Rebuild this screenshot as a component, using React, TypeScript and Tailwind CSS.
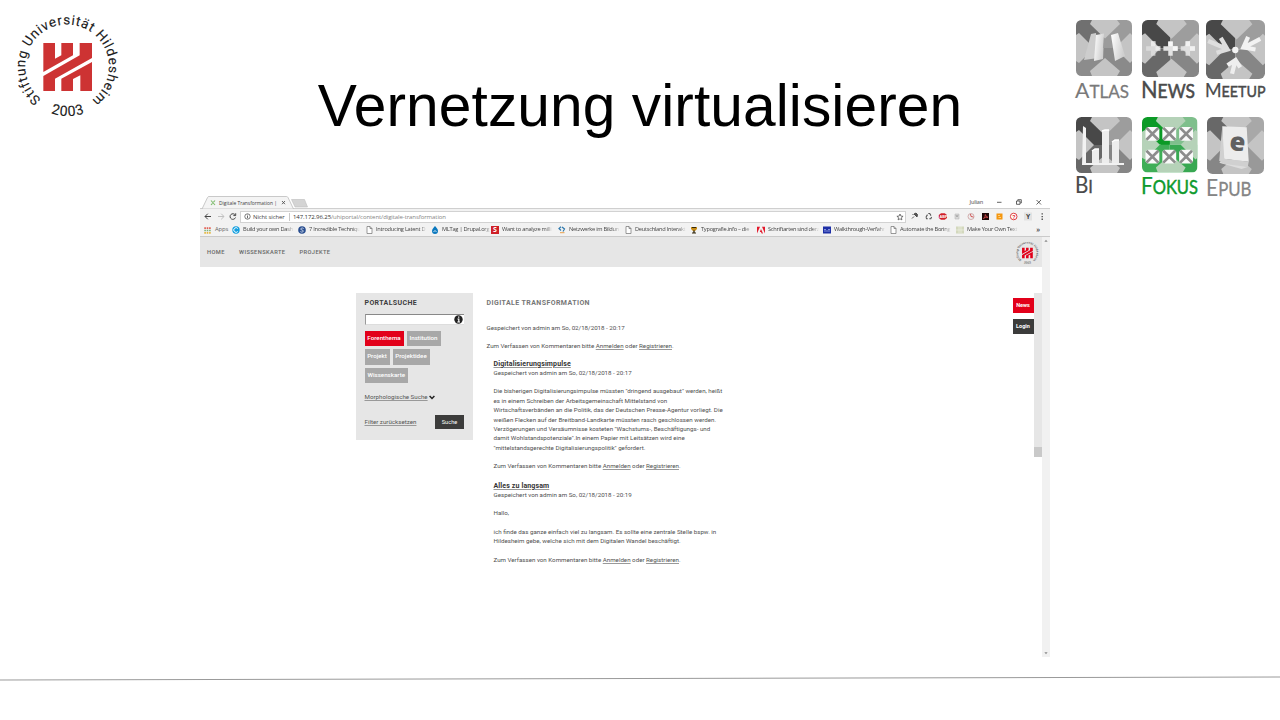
import React from "react";

type TileProps = {
  label: string;
  first: string;
  rest: string;
  color: string;
  arms: [string, string, string, string];
  light?: string;
  size: number;
  textLength: number;
  baseline: number;
  capSize: number;
  thick?: number;
  children?: React.ReactNode;
};

function Tile({ label, first, rest, color, arms, light = "#c4c4c4", size, textLength, baseline, capSize, thick = 0.1, children }: TileProps) {
  const id = `clip-${label}`;
  return (
    <svg className="block overflow-visible" width={size} height="84" viewBox={`0 0 ${size} 84`}>
      <defs>
        <clipPath id={id}>
          <rect width="56" height="56" rx="5.5" />
        </clipPath>
        <linearGradient id="sheet" x1="0" y1="0" x2="1" y2="0.4">
          <stop offset="0" stopColor="#ffffff" />
          <stop offset="1" stopColor="#cfcfcf" />
        </linearGradient>
      </defs>
      <g transform={`scale(${size / 56})`} clipPath={`url(#${id})`}>
        <path d="M0 0H28V28H0Z" fill={arms[0]} />
        <path d="M28 0H56V28H28Z" fill={arms[1]} />
        <path d="M0 28H28V56H0Z" fill={arms[2]} />
        <path d="M28 28H56V56H28Z" fill={arms[3]} />
        <g fill={light}>
          <path d="M16 0H41L44 4L29 18.5L14 4Z" />
          <path d="M16 56H41L44 51L29 38L14 51Z" />
          <path d="M0 15L3 13L18 28L3 43L0 41Z" />
          <path d="M56 15L54 13L39 28L54 43L56 41Z" />
        </g>
        {children}
      </g>
      <text x="-1" y={baseline} fill={color} stroke={color} strokeWidth={thick} fontFamily="Lato, sans-serif" textLength={textLength} lengthAdjust="spacingAndGlyphs">
        <tspan fontSize={capSize}>{first}</tspan>
        <tspan fontSize={capSize * 0.8} strokeWidth={thick + 0.2}>{rest}</tspan>
      </text>
    </svg>
  );
}

const gray: [string, string, string, string] = ["#484848", "#9d9d9d", "#686868", "#868686"];

function Plus({ x, o }: { x: number; o: number }) {
  return (
    <g transform={`translate(${x} 28)`} opacity={o}>
      <path d="M-2.2 -7H2.2V-2.2H7V2.2H2.2V7H-2.2V2.2H-7V-2.2H-2.2Z" fill="#e2e2e2" />
      <path d="M-2.2 -7H2.2V-2.2H-2.2Z M2.2 -2.2H7V2.2H2.2Z" fill="#f8f8f8" />
    </g>
  );
}

function TileGrid() {
  const cells = [6.5, 23.5, 40.5].flatMap((x) => [10, 33].map((y) => [x, y]));
  return (
    <div className="grid grid-cols-[66px_64px_60px] grid-rows-[97px_84px]">
      <Tile label="atlas" first="A" rest="TLAS" color="#7a7a7a" arms={["#707070", "#9b9b9b", "#8c8c8c", "#8a8a8a"]} size={56} textLength={54} baseline={77.5} capSize={22}>
        <path d="M15 14L20 13L22 38L8 40Z" fill="#cdcdcd" />
        <path d="M20 15L28 13.5L27 39L18 41Z" fill="url(#sheet)" />
        <path d="M35 15L42 13L49 36L39 41Z" fill="url(#sheet)" />
      </Tile>
      <Tile label="news" first="N" rest="EWS" color="#4a4a4a" arms={gray} size={57} textLength={54} baseline={77.5} capSize={23.5} thick={0.35}>
        <Plus x={11} o={0.75} />
        <Plus x={28} o={1} />
        <Plus x={45} o={0.9} />
      </Tile>
      <Tile label="meetup" first="M" rest="EETUP" color="#4a4a4a" arms={gray} size={59} textLength={60.5} baseline={77} capSize={19.5} thick={0.25}>
        <g stroke="#eeeeee" strokeWidth="4" fill="none">
          <path d="M2 20L19 27M14 17L20.5 28L10 31" stroke="#dedede" />
          <path d="M51.5 18L36 26M40 16L35.5 26L47 28" stroke="#f2f2f2" />
          <path d="M24.7 51L28 38M20.5 43L28 38L32.5 45" />
        </g>
        <circle cx="27.8" cy="28.5" r="3" fill="#f4f4f4" />
      </Tile>
      <Tile label="bi" first="B" rest="I" color="#4a4a4a" arms={gray} size={56} textLength={18} baseline={76} capSize={22.5} thick={0.15}>
        <path d="M7 9L10 11V46H48V48H6Z" fill="#f2f2f2" />
        <path d="M16 34L19 32H23V46H16Z M26 14L29 13H33V46H26Z M36 25L39 23H43V46H36Z" fill="#ededed" />
        <path d="M16 34L19 32H23M26 14L29 13H33M36 25L39 23H43" stroke="#fff" strokeWidth="1.5" fill="none" />
      </Tile>
      <Tile label="fokus" first="F" rest="OKUS" color="#0c9a2c" arms={["#0b9a26", "#7fbf8c", "#3fae57", "#38a852"]} light="#b5d2b8" size={55.5} textLength={57} baseline={77} capSize={23} thick={0.25}>
        <path d="M19 15H28V28H19Z" fill="#0b9a26" />
        {cells.map(([x, y]) => (
          <g key={`${x}-${y}`} transform={`translate(${x - 3} ${y})`}>
            <path d="M2 0H12L14 2V12L12 14H2L0 12V2Z" fill="#fafafa" />
            <path d="M1 1L13 13M13 1L1 13" stroke="#8c8c8c" strokeWidth="2.7" />
          </g>
        ))}
      </Tile>
      <div className="pl-px">
        <Tile label="epub" first="E" rest="PUB" color="#858585" arms={["#686868", "#a8a8a8", "#868686", "#999999"]} size={57} textLength={45.5} baseline={78.5} capSize={23}>
          <path d="M15 43L40 49L34 51L12 45Z" fill="#dddddd" />
          <path d="M15 9L39 10L41 44L16 41Z" fill="#ececec" />
          <path d="M15 9L12 43L16 46L40 49L41 44L17 41Z" fill="#d0d0d0" />
          <text x="22" y="33" fontSize="25" fontWeight="800" fontFamily="Open Sans, sans-serif" fill="#606060" transform="rotate(5 28 28)">e</text>
        </Tile>
      </div>
    </div>
  );
}

function UniLogo({ size, id, red, ink }: { size: number; id: string; red: string; ink: string }) {
  return (
    <svg width={size} height={size} viewBox="16 13 104 104" className="block shrink-0 overflow-visible">
      <defs>
        <path id={`${id}-top`} d="M41.2 99.2A41.8 41.8 0 1 1 93.4 98.8" />
        <path id={`${id}-bottom`} d="M42 108.7A50 50 0 0 0 94 108.7" />
      </defs>
      <g fill={ink} stroke={ink} strokeWidth="0.1" fontFamily="Roboto, sans-serif" fontSize="13.6">
        <text textLength="208">
          <textPath href={`#${id}-top`} textLength="208">Stiftung Universität Hildesheim</textPath>
        </text>
        <text textAnchor="middle" fontSize="14.2" letterSpacing="0.7">
          <textPath href={`#${id}-bottom`} startOffset="50%">2003</textPath>
        </text>
      </g>
      <g fill={red} transform="translate(40 40) scale(0.3333)">
        <path d="M10 9H45V56L64 46V9H99V46L10 96Z" />
        <path d="M10 108L119 46V9H156V54L45 116V153H10Z" />
        <path d="M64 153V116L156 66V153H121V106L99 117V153Z" />
      </g>
    </svg>
  );
}

function PageGlyph() {
  return (
    <svg width="7" height="8" viewBox="0 0 7 8">
      <path d="M1 .5H4L6 2.5V7.5H1ZM4 .5V2.5H6" fill="#fff" stroke="#707070" strokeWidth=".7" />
    </svg>
  );
}

const bookmarks: { text: string; icon: React.ReactNode; w: string }[] = [
  { text: "Build your own Dash", w: "w-[66px]", icon: <svg width="8" height="8" viewBox="0 0 8 8"><circle cx="4" cy="4" r="3.7" fill="#129fe0" /><path d="M5.8 2.5A2.3 2.3 0 1 0 5.8 5.5" stroke="#fff" fill="none" /></svg> },
  { text: "7 Incredible Techniqu", w: "w-[67px]", icon: <svg width="8" height="8" viewBox="0 0 8 8"><circle cx="4" cy="4" r="3.8" fill="#284d8f" /><path d="M5.7 2.5Q4 1.2 2.8 2.6Q2.4 3.8 4 4Q5.8 4.3 5.2 5.6Q4 6.8 2.3 5.6" fill="none" stroke="#dde6f5" strokeWidth=".8" /></svg> },
  { text: "Introducing Latent D", w: "w-[66px]", icon: <PageGlyph /> },
  { text: "MLTag | Drupal.org", w: "w-[60px]", icon: <svg width="8" height="8" viewBox="0 0 8 8"><path d="M4 0C5 1.5 7 2.5 7 5A3 3 0 0 1 1 5C1 2.5 3 1.5 4 0Z" fill="#0b78be" /><path d="M2.5 5.5Q4 4 5.5 5.5" stroke="#fff" strokeWidth=".8" fill="none" /></svg> },
  { text: "Want to analyze milli", w: "w-[67px]", icon: <span className="flex size-[8px] items-center justify-center bg-[#cf2027] text-[7px] font-bold tracking-normal text-white">S</span> },
  { text: "Netzwerke im Bildun", w: "w-[66px]", icon: <svg width="8" height="8" viewBox="0 0 8 8"><path d="M3 .8L1 2.5L3 4.5M4 1L6.5 3L5 5.5" stroke="#2f79ad" strokeWidth="1.2" fill="none" /><path d="M2 6.7H6.5" stroke="#e9a14c" /></svg> },
  { text: "Deutschland Interakt", w: "w-[66px]", icon: <PageGlyph /> },
  { text: "Typografie.info – die", w: "w-[67px]", icon: <svg width="8" height="8" viewBox="0 0 8 8"><path d="M1 1H7V3L5 5H3L1 3Z" fill="#c58b17" /><path d="M2 1H6V2H2ZM3.3 4.5H4.7V6.5H6V7.5H2V6.5H3.3Z" fill="#33280f" /></svg> },
  { text: "Schriftarten sind derz", w: "w-[66px]", icon: <svg width="8" height="8" viewBox="0 0 8 8"><path d="M0 .7H3L0 7.5ZM5 .7H8V7.5ZM4 3L6 7.5H4.7L4 6H2.8Z" fill="#e3192b" /></svg> },
  { text: "Walkthrough-Verfahr", w: "w-[66px]", icon: <svg width="8" height="8" viewBox="0 0 8 8"><path d="M0 .5H8V7.5H0Z" fill="#1d2fa6" /><path d="M1 3.5H3M5 3.5H7M1 5H7" stroke="#b5bdf0" strokeWidth=".7" /></svg> },
  { text: "Automate the Boring", w: "w-[67px]", icon: <PageGlyph /> },
  { text: "Make Your Own Text", w: "w-[66px]", icon: <svg width="8" height="8" viewBox="0 0 8 8"><path d="M0 .5H8V7.5H0Z" fill="#d3d8bd" /><path d="M0 4H8M3 0V7M5 0V7" stroke="#eef0e2" strokeWidth=".7" /></svg> },
];

function BrowserChrome() {
  return (
    <div className="flex h-[41px] flex-col font-['Open_Sans',sans-serif] text-[6px] leading-none text-[#444]">
      <div className="flex h-[13px] justify-between border-b border-[#cfcfcf]">
        <svg width="120" height="13" viewBox="0 0 120 13" className="mb-[-1px] shrink-0">
          <path d="M2 13L7.5 1.5Q8 .5 9 .5H86.5Q87.5 .5 88 1.5L93.5 13Z" fill="#f4f4f4" stroke="#bcbcbc" strokeWidth=".8" />
          <path d="M91.5 3.5H104.5L107.5 11H95Z" fill="#d4d4d4" stroke="#bebebe" strokeWidth=".6" />
          <path d="M11 4.5L15 9M15 4.5L13.5 6.2M12.5 7.3L11 9" stroke="#7dbb6b" strokeWidth="1.1" />
          <path d="M82 5L85 8.2M85 5L82 8.2" stroke="#555" strokeWidth=".9" />
          <text x="19" y="9" fontFamily="Open Sans, sans-serif" fontSize="5.9" fill="#3c3c3c" textLength="58" lengthAdjust="spacingAndGlyphs">Digitale Transformation |</text>
        </svg>
        <div className="flex items-center">
          <span className="mr-[12px] pt-px text-[5.5px] font-semibold tracking-[-0.25px] text-[#777]">Julian</span>
          <svg width="55" height="12" viewBox="0 0 55 12" fill="none" stroke="#3c3c3c" strokeWidth=".8">
            <path d="M2 6.3H6.5M21.5 5H25V8.3H21.5ZM22.8 4.8V3.7H26.3V7H25.2M41.5 4L46 8.5M46 4L41.5 8.5" />
          </svg>
        </div>
      </div>
      <div className="flex h-[15px] items-center bg-[#f2f2f2]">
        <svg width="40" height="13" viewBox="0 0 40 13" fill="none" strokeWidth="1">
          <path d="M11 6.5H5M7.8 3.7L5 6.5L7.8 9.3" stroke="#444" />
          <path d="M18 6.5H24M21.2 3.7L24 6.5L21.2 9.3" stroke="#c0c0c0" />
          <path d="M35.2 5A2.8 2.8 0 1 0 35.5 7.5M35.7 3.3V5.6H33.4" stroke="#444" />
        </svg>
        <div className="flex h-[12px] w-[666px] items-center border border-[#d2d2d2] bg-white pl-[3px]">
          <svg width="7" height="7" viewBox="0 0 7 7" className="mr-[2px]"><circle cx="3.5" cy="3.5" r="2.7" fill="none" stroke="#444" strokeWidth=".7" /><path d="M3.5 3V5.2M3.5 1.7V2.5" stroke="#444" strokeWidth=".8" /></svg>
          <span className="w-[36px] whitespace-nowrap pt-px text-[6px] tracking-[-0.12px]">Nicht sicher</span>
          <span className="mr-[3px] h-[8px] w-px bg-[#c8c8c8]" />
          <span className="grow whitespace-nowrap pt-px text-[6px] tracking-[-0.08px] text-[#858585]"><span className="text-[#333]">147.172.96.25</span>/uhiportal/content/digitale-transformation</span>
          <svg width="8" height="8" viewBox="0 0 8 8" className="mr-[1px]"><path d="M4 1L4.9 3.1L7.1 3.3L5.4 4.7L5.9 6.9L4 5.8L2.1 6.9L2.6 4.7L.9 3.3L3.1 3.1Z" fill="none" stroke="#444" strokeWidth=".7" /></svg>
        </div>
        <svg width="144" height="13" viewBox="906 0 144 13">
          <path d="M912 8.5L914 6.5M914 4L917 7L917.5 4.5L916 3ZM912.5 4L913.5 5" stroke="#444" fill="#555" strokeWidth=".9" />
          <path d="M926 7L927.5 4.6M928.3 3.5H929.7L931 5.6M931.6 7L930.8 8.8H929.3M927.8 8.8H926.6L926 7" fill="none" stroke="#555" strokeWidth="1.1" />
          <path d="M941 3.2H944.7L947 5V8L944.7 9.8H941L938.8 8V5Z" fill="#d0202b" />
          <text x="939.6" y="7.9" fontSize="3.8" fontWeight="700" fontFamily="Liberation Sans" fill="#fff">ABP</text>
          <path d="M955 4H959V9H955Z" fill="#d7d7d7" stroke="#bbb" strokeWidth=".6" />
          <path d="M956 5L957 7L958 5" stroke="#888" fill="none" strokeWidth=".6" />
          <circle cx="971" cy="6.5" r="3" fill="#eee" stroke="#c99b9b" strokeWidth=".8" /><path d="M971 6.5L973.5 7M971 6.5L970.5 4" stroke="#c33" strokeWidth=".8" />
          <path d="M982 3H989V10H982Z" fill="#1e0707" /><path d="M983.5 8.5Q985.5 7 985.3 4.5Q986 7 988 7.3Q985 7 983.5 8.5" stroke="#e55" strokeWidth=".7" fill="none" />
          <path d="M996.5 3.5H1002.5V9.5H996.5Z" fill="#f5970f" /><path d="M998 5.5H1000M998.5 7.5H1001" stroke="#ffe2b0" strokeWidth=".7" />
          <circle cx="1013.7" cy="6.5" r="3.3" fill="#fff" stroke="#dd2a2a" strokeWidth=".9" /><text x="1012.3" y="8.5" fontSize="5.3" fontWeight="700" fontFamily="Liberation Sans" fill="#d22">?</text>
          <path d="M1024 2.5H1032V10.5H1024Z" fill="#e2e2e2" /><text x="1026" y="8.8" fontSize="6.3" fontWeight="700" fontFamily="Liberation Sans" fill="#333">Y</text>
          <path d="M1042.2 3.2V4.6M1042.2 5.9V7.3M1042.2 8.6V10" stroke="#444" strokeWidth="1.3" />
        </svg>
      </div>
      <div className="flex h-[13px] items-center overflow-hidden border-b border-[#cacaca] bg-[#f2f2f2] pl-[4px] text-[5.7px] tracking-[-0.26px]">
        <div className="flex w-[28px] shrink-0 items-center gap-[4px]">
          <svg width="7" height="7" viewBox="0 0 7 7">
            <path d="M.3 .3h1.6v1.6H.3zM2.7 .3h1.6v1.6H2.7zM5.1 .3h1.6v1.6H5.1z" fill="#e15b50" />
            <path d="M.3 2.7h1.6v1.6H.3zM2.7 2.7h1.6v1.6H2.7zM5.1 2.7h1.6v1.6H5.1z" fill="#7cb37c" />
            <path d="M.3 5.1h1.6v1.6H.3zM2.7 5.1h1.6v1.6H2.7zM5.1 5.1h1.6v1.6H5.1z" fill="#e5b53d" />
          </svg>
          <span className="text-[5.9px] tracking-[-0.15px] text-[#666]">Apps</span>
        </div>
        {bookmarks.map((b) => (
          <div key={b.text} className={`flex shrink-0 items-center gap-[3px] ${b.w}`}>
            <span className="flex w-[8px] shrink-0 justify-center">{b.icon}</span>
            <span className="w-[51px] overflow-hidden whitespace-nowrap py-[2px] [mask-image:linear-gradient(to_right,black_85%,transparent)]">{b.text}</span>
          </div>
        ))}
        <span className="ml-auto mr-[10px] pb-[2px] text-[7px] font-semibold">»</span>
      </div>
    </div>
  );
}

const link = "underline decoration-[#999] decoration-[0.8px] underline-offset-[1px]";

function Comment() {
  return (
    <p>
      Zum Verfassen von Kommentaren bitte <a className={link}>Anmelden</a> oder <a className={link}>Registrieren</a>.
    </p>
  );
}

function Tag({ text, w, active }: { text: string; w: string; active?: boolean }) {
  return (
    <span className={`flex h-[15.5px] items-center justify-center pt-[0.5px] text-[6.2px] font-medium text-white ${w} ${active ? "bg-[#e2001a]" : "bg-[#a8a8a8]"}`}>{text}</span>
  );
}

function SearchPanel() {
  return (
    <aside className="flex h-[147px] w-[117px] flex-col bg-[#e6e6e6] pl-[8.5px] pr-[9px] pt-[6px]">
      <h2 className="text-[7px] font-bold leading-[8px] tracking-[0.38px] text-[#3c3c3c]">PORTALSUCHE</h2>
      <div className="mt-[7px] flex h-[11px] items-center justify-end border-b border-l border-t border-b-[#ddd] border-l-[#999] border-t-[#888] bg-white pr-px">
        <svg width="9" height="9" viewBox="0 0 9 9"><circle cx="4.5" cy="4.5" r="4.2" fill="#222" /><path d="M4.7 1.5V2.8M3.5 4H4.8V7M3.3 7H6" stroke="#fff" strokeWidth="1.2" fill="none" /></svg>
      </div>
      <div className="mt-[5.5px] flex flex-wrap gap-x-[3px] gap-y-[3.1px]">
        <Tag text="Forenthema" w="w-[39px]" active />
        <Tag text="Institution" w="w-[34px]" />
        <Tag text="Projekt" w="w-[25px]" />
        <Tag text="Projektidee" w="w-[37px]" />
        <Tag text="Wissenskarte" w="w-[43.5px]" />
      </div>
      <div className="mt-[10px] flex items-center gap-[1.5px] text-[6.2px] leading-[8px] text-[#555]">
        <a className={link}>Morphologische Suche</a>
        <svg width="6" height="5" viewBox="0 0 6 5"><path d="M.6 1L3 3.5L5.4 1" stroke="#222" strokeWidth="1.5" fill="none" /></svg>
      </div>
      <div className="mt-[14px] flex items-center justify-between text-[6.2px] leading-[8px] text-[#555]">
        <a className={link}>Filter zurücksetzen</a>
        <span className="flex h-[13.5px] w-[29px] items-center justify-center bg-[#3c3c3b] pt-[0.5px] text-[5.6px] text-white">Suche</span>
      </div>
    </aside>
  );
}

function Article() {
  return (
    <article className="ml-[13.5px] w-[250px] whitespace-nowrap pt-[6.4px] text-[6.2px] leading-[9.35px] text-[#505050]">
      <h1 className="text-[7px] font-bold tracking-[0.42px] text-[#777]">DIGITALE TRANSFORMATION</h1>
      <p className="mt-[15px]">Gespeichert von admin am So, 02/18/2018 - 20:17</p>
      <div className="mt-[9.2px]"><Comment /></div>
      <div className="pl-[7px]">
        <h2 className="mt-[8.3px] text-[7px] font-bold tracking-[0.13px] text-[#333]"><span className={link}>Digitalisierungsimpulse</span></h2>
        <p className="mt-[-0.3px]">Gespeichert von admin am So, 02/18/2018 - 20:17</p>
        <p className="mt-[9.2px]">
          Die bisherigen Digitalisierungsimpulse müssten "dringend ausgebaut" werden, heißt<br />
          es in einem Schreiben der Arbeitsgemeinschaft Mittelstand von<br />
          Wirtschaftsverbänden an die Politik, das der Deutschen Presse-Agentur vorliegt. Die<br />
          weißen Flecken auf der Breitband-Landkarte müssten rasch geschlossen werden.<br />
          Verzögerungen und Versäumnisse kosteten "Wachstums-, Beschäftigungs- und<br />
          damit Wohlstandspotenziale".In einem Papier mit Leitsätzen wird eine<br />
          "mittelstandsgerechte Digitalisierungspolitik" gefordert.
        </p>
        <div className="mt-[9.2px]"><Comment /></div>
        <h2 className="mt-[10.2px] text-[7px] font-bold tracking-[0.13px] text-[#333]"><span className={link}>Alles zu langsam</span></h2>
        <p className="mt-[-0.4px]">Gespeichert von admin am So, 02/18/2018 - 20:19</p>
        <p className="mt-[9.3px]">Hallo,</p>
        <p className="mt-[9.3px]">
          ich finde das ganze einfach viel zu langsam. Es sollte eine zentrale Stelle bspw. in<br />
          Hildesheim gebe, welche sich mit dem Digitalen Wandel beschäftigt.
        </p>
        <div className="mt-[9.3px]"><Comment /></div>
      </div>
    </article>
  );
}

function Portal() {
  return (
    <div className="flex h-[420px] font-[Roboto,sans-serif]">
      <div className="flex w-[842px] flex-col">
        <nav className="flex h-[30px] items-center bg-[#e6e6e6] pl-[7px] pr-[3px] text-[5.7px] font-medium tracking-[0.4px] text-[#666]">
          <span className="w-[32px]">HOME</span>
          <span className="w-[60.5px]">WISSENSKARTE</span>
          <span className="grow">PROJEKTE</span>
          <UniLogo size={23} id="small" red="#e2001a" ink="#666" />
        </nav>
        <div className="mt-[26px] flex pl-[156px]">
          <SearchPanel />
          <Article />
          <div className="ml-auto flex flex-col gap-[6.5px] pt-[4.5px] text-[5.5px] font-bold text-white">
            <span className="flex h-[15px] w-[21px] items-center justify-center bg-[#e2001a]">News</span>
            <span className="flex h-[15px] w-[21px] items-center justify-center bg-[#3c3c3b]">Login</span>
          </div>
          <div className="flex h-[164px] w-[8.5px] flex-col justify-end bg-[#e6e6e6]">
            <span className="h-[10px] bg-[#c9c9c9]" />
          </div>
        </div>
      </div>
      <div className="flex w-[8px] flex-col items-center justify-between bg-[#f1f1f1] py-[2px]">
        <svg width="4" height="4" viewBox="0 0 4 4"><path d="M2 .8L3.6 2.8H.4Z" fill="#888" /></svg>
        <svg width="4" height="4" viewBox="0 0 4 4"><path d="M2 3.2L3.6 1.2H.4Z" fill="#888" /></svg>
      </div>
    </div>
  );
}

export default function App() {
  return (
    <div className="flex h-[720px] w-[1280px] flex-col overflow-hidden bg-white">
      <header className="flex h-[196px] shrink-0 justify-between">
        <div className="w-[204px] pl-[16px] pt-[13px]">
          <UniLogo size={104} id="large" red="#cd3333" ink="#1c1c1c" />
        </div>
        <h1 className="whitespace-nowrap pt-[73px] font-['Liberation_Sans',Arial,sans-serif] text-[58.67px] leading-[66px] tracking-[0.08px] text-black">Vernetzung virtualisieren</h1>
        <div className="w-[204px] pt-[20px]">
          <TileGrid />
        </div>
      </header>
      <main className="ml-[200px] h-[461px] w-[850px] shrink-0">
        <BrowserChrome />
        <Portal />
      </main>
      <svg width="1280" height="8" viewBox="0 674 1280 8" className="mt-[17px] block shrink-0">
        <path d="M0 680L1280 677" stroke="#9a9a9a" strokeWidth="1" />
      </svg>
    </div>
  );
}
